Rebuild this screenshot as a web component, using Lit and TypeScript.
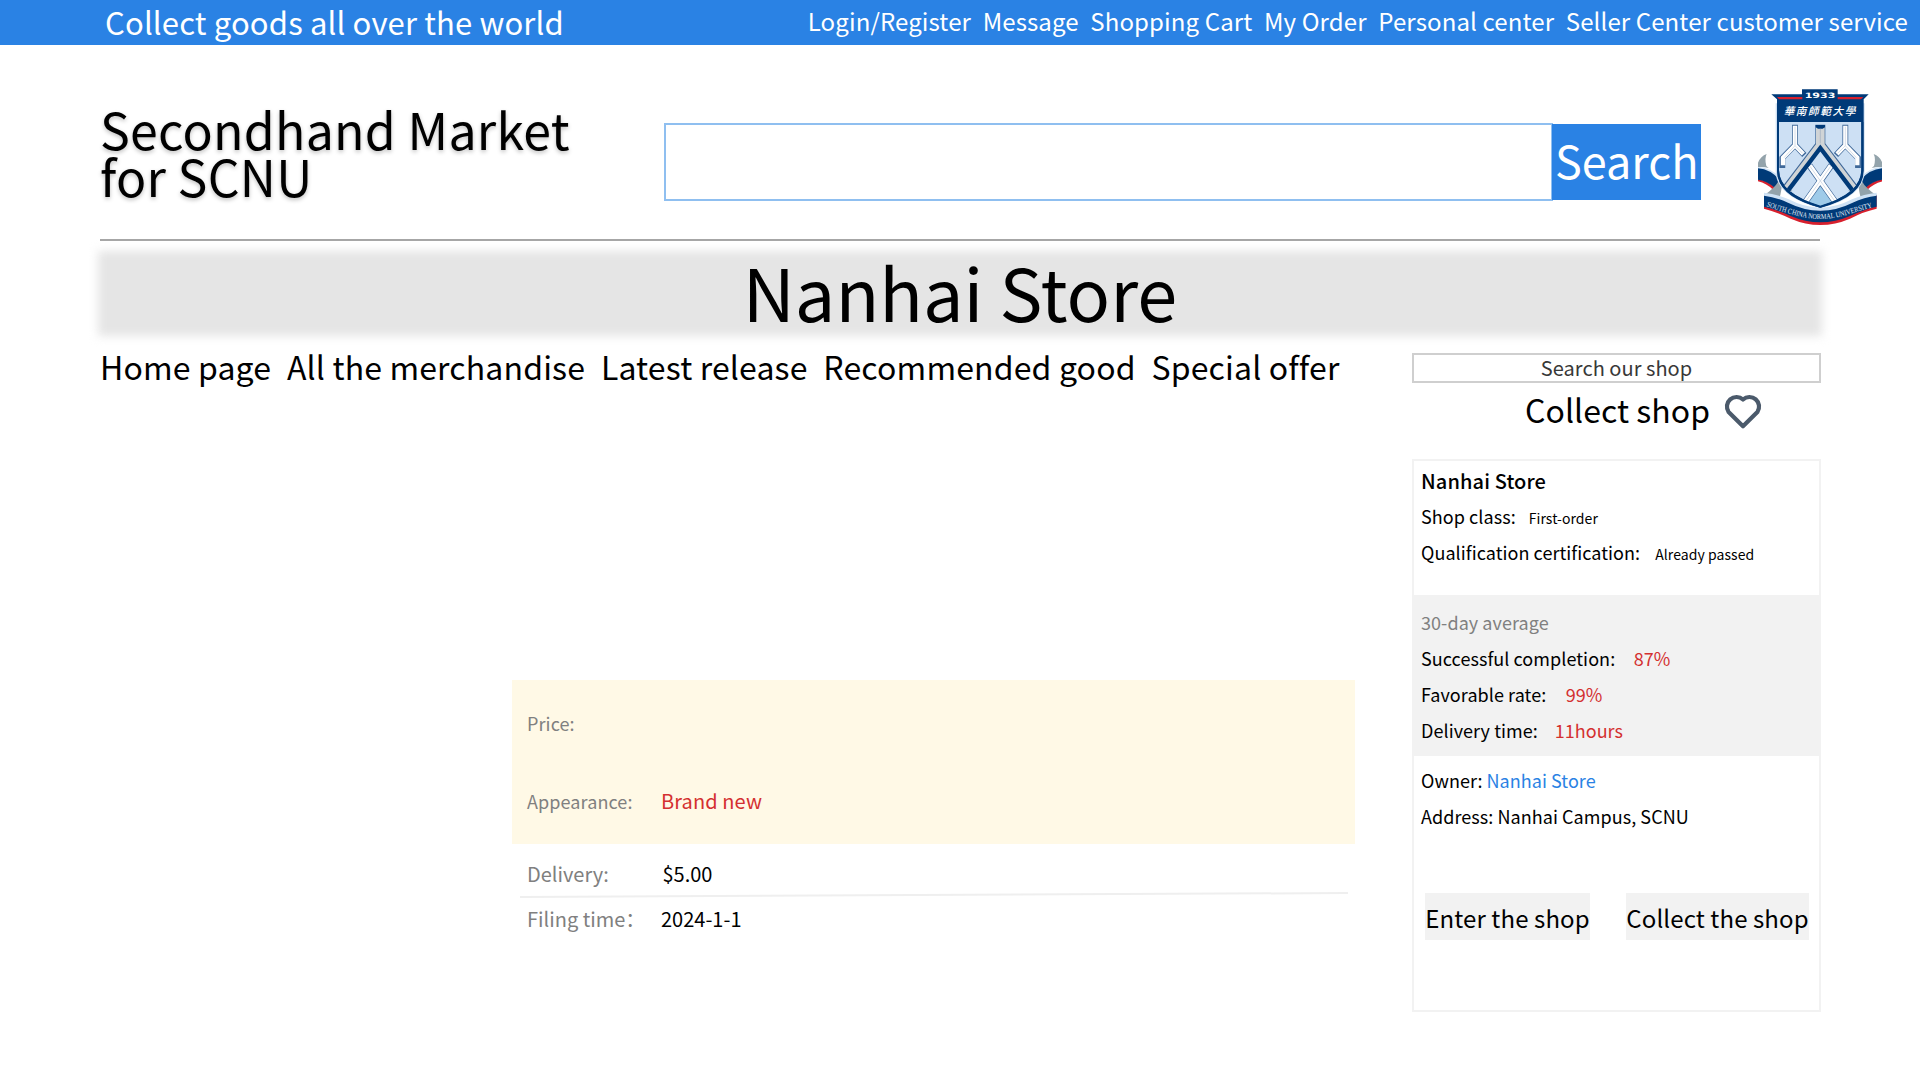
import { LitElement, html, css, svg } from "lit";
import { customElement } from "lit/decorators.js";

const NAV = ["Login/Register", "Message", "Shopping Cart", "My Order", "Personal center", "Seller Center customer service"];
const MENU = ["Home page", "All the merchandise", "Latest release", "Recommended good", "Special offer"];
const AVERAGES = [
  ["Successful completion:", "87%"],
  ["Favorable rate:", "99%"],
  ["Delivery time:", "11hours"],
];
const CREST_NAME = [..."華南師範大學"];

@customElement("school-crest")
class SchoolCrest extends LitElement {
  static styles = css`
    :host { display: block; }
    svg { display: block; }
    .year { font: 700 22px "DejaVu Sans", sans-serif; fill: #fff; }
    .name { font: italic 500 32px "Noto Sans CJK SC", sans-serif; fill: #fff; }
    .motto { font: 400 22.5px "Liberation Serif", serif; fill: #e3edf7; }
  `;

  private wing() {
    return svg`
      <path d="M54 262V248Q62 228 80 222Q73 236 79 258L86 264Q70 260 54 262Z" fill="#93a3ab"/>
      <path d="M54 261Q92 262 122 294L118 300Q88 270 54 266Z" fill="#cfe2f5"/>
      <path d="M54 298Q78 300 106 322L100 330Q80 310 54 304Z" fill="#d7202d"/>
      <path d="M54 265Q92 268 119 300L106 325Q82 302 54 299Z" fill="#003a78"/>
      <path d="M127 298Q124 342 118 354Q98 354 73 345Q104 324 116 303Z" fill="#93a3ab"/>
    `;
  }

  private fork() {
    return svg`
      <path d="M165 134V195L127 234V264M165 195L193 225" fill="none" stroke="#3f6899" stroke-width="17.5"/>
      <path d="M165 137V196L129 233V256M165 196L190 222" fill="none" stroke="#fff" stroke-width="13"/>
      <path d="M165 140V197L132 233M165 197L188 220" fill="none" stroke="#b4c3d6" stroke-width="1.6"/>
    `;
  }

  render() {
    return html`<svg width="124" height="138" viewBox="54 24 372 414" role="img" aria-label="South China Normal University">
      <defs>
        <clipPath id="field"><path d="M117 126H364V270Q364 342 241 378Q117 342 117 270Z"/></clipPath>
        <path id="ribbon" d="M77 377Q104 389 160 404Q241 430 322 404Q372 388 404 380"/>
      </defs>
      ${this.wing()}
      <g transform="matrix(-1 0 0 1 481 0)">${this.wing()}</g>
      <path d="M72 344Q108 350 140 364Q241 418 342 364Q372 350 410 344V386Q372 394 330 416Q241 454 152 416Q110 396 72 386Z" fill="#d7202d"/>
      <path d="M72 344Q108 350 140 364Q241 418 342 364Q372 350 410 344V380Q372 388 330 408Q241 446 152 408Q110 389 72 380Z" fill="#003a78"/>
      <path d="M72 338Q110 342 146 358Q241 408 336 358Q372 342 410 338V347Q372 352 338 368Q241 416 144 368Q108 352 72 347Z" fill="#cfe2f5"/>
      <path d="M107 70V272Q107 350 241 385Q374 350 374 272V70Z" fill="#cfe0f2"/>
      <path d="M94 43H186V28H293V43H386L371 58V272Q370 350 241 383Q112 350 111 272V58Z" fill="#003a78"/>
      <path d="M111 51H187V58H117ZM293 51H370L363 58H293Z" fill="#d7202d"/>
      <path d="M117 126H364V270Q362 342 241 376Q119 342 117 270Z" fill="#cde0f4"/>
      <g clip-path="url(#field)">
        ${this.fork()}
        <g transform="matrix(-1 0 0 1 481 0)">${this.fork()}</g>
        <path d="M241 134V195L140 328M241 195L342 328" fill="none" stroke="#3f6899" stroke-width="30"/>
        <path d="M241 136V197L140 330M241 197L342 330" fill="none" stroke="#d0d4d6" stroke-width="26"/>
        <path d="M227 135H255V142L248 146H234L227 142Z" fill="#003a78"/>
        <path d="M241 146V190" stroke="#93a5bb" stroke-width="1.6"/>
        <path d="M241 211L150 328L241 380L332 328Z" fill="#cde0f4"/>
        <path d="M241 316L186 364L241 380L296 364Z" fill="#9fcbe9"/>
        <path d="M208 256L286 366M274 256L196 366" fill="none" stroke="#3f6899" stroke-width="19"/>
        <path d="M209 257L286 366M273 257L196 366" fill="none" stroke="#fff" stroke-width="15"/>
        <path d="M210 259L284 363M272 259L198 363" fill="none" stroke="#b4c3d6" stroke-width="1.6"/>
        <path d="M144 332L241 204L338 332" fill="none" stroke="#003a78" stroke-width="13"/>
      </g>
      <path d="M114 126V271Q114 344 241 380Q367 344 367 271V126" fill="none" stroke="#003a78" stroke-width="6"/>
      <text class="year" x="240" y="54" text-anchor="middle" textLength="92" lengthAdjust="spacingAndGlyphs">1933</text>
      <text class="name" x=${CREST_NAME.map((_, i) => 131 + i * 36.6).join(" ")} y="105">${CREST_NAME.join("")}</text>
      <text class="motto"><textPath href="#ribbon" startOffset="2" textLength="328" lengthAdjust="spacingAndGlyphs">SOUTH CHINA NORMAL UNIVERSITY</textPath></text>
    </svg>`;
  }
}

@customElement("app-root")
class AppRoot extends LitElement {
  static styles = css`
    :host {
      display: block;
      width: 1920px;
      height: 1080px;
      overflow: hidden;
      background: #fff;
      color: #000;
      font-family: "Noto Sans CJK SC", "Noto Sans", sans-serif;
      font-size: 18px;
    }
    * { box-sizing: border-box; }
    a { color: inherit; text-decoration: none; white-space: nowrap; }
    h1, h2, h3, p { margin: 0; font-weight: 400; white-space: nowrap; }
    button { border: 0; padding: 0; font: inherit; color: inherit; white-space: nowrap; }

    .topbar {
      display: flex;
      justify-content: space-between;
      height: 45px;
      padding: 0 12px 0 105px;
      background: #2a82e4;
      color: #fff;
      line-height: 42px;
    }
    .slogan { font-size: 31px; line-height: 44px; letter-spacing: 0.16px; }
    .links { display: flex; gap: 11.6px; font-size: 24px; letter-spacing: 0.12px; }

    .header {
      display: flex;
      align-items: flex-start;
      height: 194px;
      padding-left: 100px;
    }
    .brand {
      width: 564px;
      padding-top: 60px;
      font-size: 50px;
      line-height: 47px;
      letter-spacing: 0.25px;
      text-shadow: 0 2px 4px rgba(0, 0, 0, 0.25);
    }
    .search { display: flex; width: 1094px; padding-top: 78px; }
    .field { width: 889px; height: 78px; border: 2px solid #8fbff0; background: #fff; }
    .go {
      width: 149px;
      height: 76px;
      margin: 1px 0 0 -1px;
      padding: 0 0 5px 3px;
      background: #2a82e4;
      color: #fff;
      font-size: 45px;
      line-height: 71px;
      text-align: left;
    }
    school-crest { padding-top: 43px; }

    .rule { height: 2px; margin: 0 100px; background: #a6a6a6; }
    .banner {
      position: relative;
      height: 85px;
      margin: 10px 98px 0 98px;
      text-align: center;
    }
    .banner::before {
      content: "";
      position: absolute;
      inset: 0;
      background: #e5e5e5;
      filter: blur(5px);
    }
    .banner h2 { position: relative; font-size: 72px; line-height: 80px; }

    .body { display: flex; justify-content: space-between; padding: 0 99px 0 100px; }
    .menu {
      display: flex;
      gap: 15.8px;
      padding-top: 7px;
      height: 344px;
      font-size: 32px;
      line-height: 46px;
      letter-spacing: 0.15px;
    }
    .details { width: 843px; margin-left: 412px; }
    .offer { height: 164px; padding: 30px 0 0 15px; background: #fff9e6; }
    .offer .pair { height: 78px; line-height: 26px; }
    .pair { display: flex; align-items: baseline; }
    .pair .label { width: 134px; color: #808080; letter-spacing: 0.1px; white-space: nowrap; }
    .pair .value { font-size: 20px; }
    .offer .value { letter-spacing: 0.1px; }
    .red { color: #d43030; }
    .terms { padding: 15px 0 0 15px; font-size: 20px; }
    .terms .pair { height: 30px; line-height: 30px; }
    .terms .label { width: 135.5px; letter-spacing: 0; }
    .filed .label { width: 134px; }
    .slant { display: block; margin: 2px 0 5px -7px; }

    .side { width: 409px; padding-top: 17px; }
    .shop-search {
      height: 30px;
      border: 2px solid #cfcfcf;
      color: #383838;
      font-size: 20px;
      line-height: 26px;
      letter-spacing: 0.04px;
      text-align: center;
    }
    .collect {
      display: flex;
      gap: 12.5px;
      height: 76px;
      padding: 3px 0 0 113px;
      font-size: 32px;
      line-height: 46px;
      letter-spacing: 0.04px;
    }
    .collect svg { margin-top: 6.5px; flex: none; }
    .card {
      height: 553px;
      border: 2px solid #f2f2f2;
      letter-spacing: 0.06px;
    }
    .row {
      display: flex;
      align-items: baseline;
      height: 36px;
      padding-left: 7px;
      line-height: 36px;
      white-space: nowrap;
    }
    .row h3 { font-size: 20px; font-weight: 500; line-height: 38px; letter-spacing: 0.12px; }
    .small { margin-left: 13px; font-size: 14px; line-height: 20px; }
    .checked { margin-left: 15px; }
    .avg { margin-left: 18.5px; letter-spacing: 0; }
    .rate1 { margin-left: 19.5px; }
    .rate2 { margin-left: 17px; }
    .identity { height: 134px; padding-top: 1px; }
    .stats { height: 161px; margin: 0 -1px; padding: 9px 1px 0; background: #f2f2f2; }
    .grey { color: #808080; }
    .owner { height: 137px; padding-top: 6px; }
    .blue { margin-left: 3.8px; color: #2a82e4; }
    .actions { display: flex; justify-content: space-between; padding: 0 10px 0 11px; }
    .actions button {
      height: 47px;
      background: #f2f2f2;
      font-size: 24px;
      line-height: 45px;
      letter-spacing: 0.1px;
      padding-top: 2px;
    }
    .actions .enter { width: 165px; line-height: 44px; padding-top: 3px; }
    .keep { width: 183px; }
  `;

  render() {
    return html`
      <header class="topbar">
        <p class="slogan">Collect goods all over the world</p>
        <nav class="links">${NAV.map((t) => html`<a>${t}</a>`)}</nav>
      </header>
      <section class="header">
        <h1 class="brand">Secondhand Market<br />for SCNU</h1>
        <div class="search">
          <div class="field"></div>
          <button class="go">Search</button>
        </div>
        <school-crest></school-crest>
      </section>
      <div class="rule"></div>
      <section class="banner"><h2>Nanhai Store</h2></section>
      <main class="body">
        <div>
          <nav class="menu">${MENU.map((t) => html`<a>${t}</a>`)}</nav>
          <section class="details">
            <div class="offer">
              <div class="pair"><span class="label">Price:</span></div>
              <div class="pair"><span class="label">Appearance:</span><span class="value red">Brand new</span></div>
            </div>
            <div class="terms">
              <div class="pair"><span class="label">Delivery:</span><span class="value">$5.00</span></div>
              <svg class="slant" width="828" height="8" viewBox="0 0 828 8">
                <path d="M0 6L828 2" stroke="#efefef" stroke-width="2" />
              </svg>
              <div class="pair filed"><span class="label">Filing time：</span><span class="value">2024-1-1</span></div>
            </div>
          </section>
        </div>
        <aside class="side">
          <div class="shop-search">Search our shop</div>
          <div class="collect">
            <span>Collect shop</span>
            <svg width="40" height="37" viewBox="8 8 40 37">
              <path
                d="M28 41.2L13.6 27A9.6 9.6 0 0 1 28 14.5A9.6 9.6 0 0 1 42.4 27Z"
                fill="none" stroke="#4b5a6b" stroke-width="4.2" stroke-linejoin="round" />
            </svg>
          </div>
          <section class="card">
            <div class="identity">
              <div class="row"><h3>Nanhai Store</h3></div>
              <div class="row">Shop class:<span class="small">First-order</span></div>
              <div class="row">Qualification certification:<span class="small checked">Already passed</span></div>
            </div>
            <div class="stats">
              <div class="row grey">30-day average</div>
              ${AVERAGES.map(([k, v], i) => html`<div class="row">${k}<span class="avg rate${i} red">${v}</span></div>`)}
            </div>
            <div class="owner">
              <div class="row">Owner:<a class="blue">Nanhai Store</a></div>
              <div class="row">Address: Nanhai Campus, SCNU</div>
            </div>
            <div class="actions">
              <button class="enter">Enter the shop</button>
              <button class="keep">Collect the shop</button>
            </div>
          </section>
        </aside>
      </main>
    `;
  }
}
